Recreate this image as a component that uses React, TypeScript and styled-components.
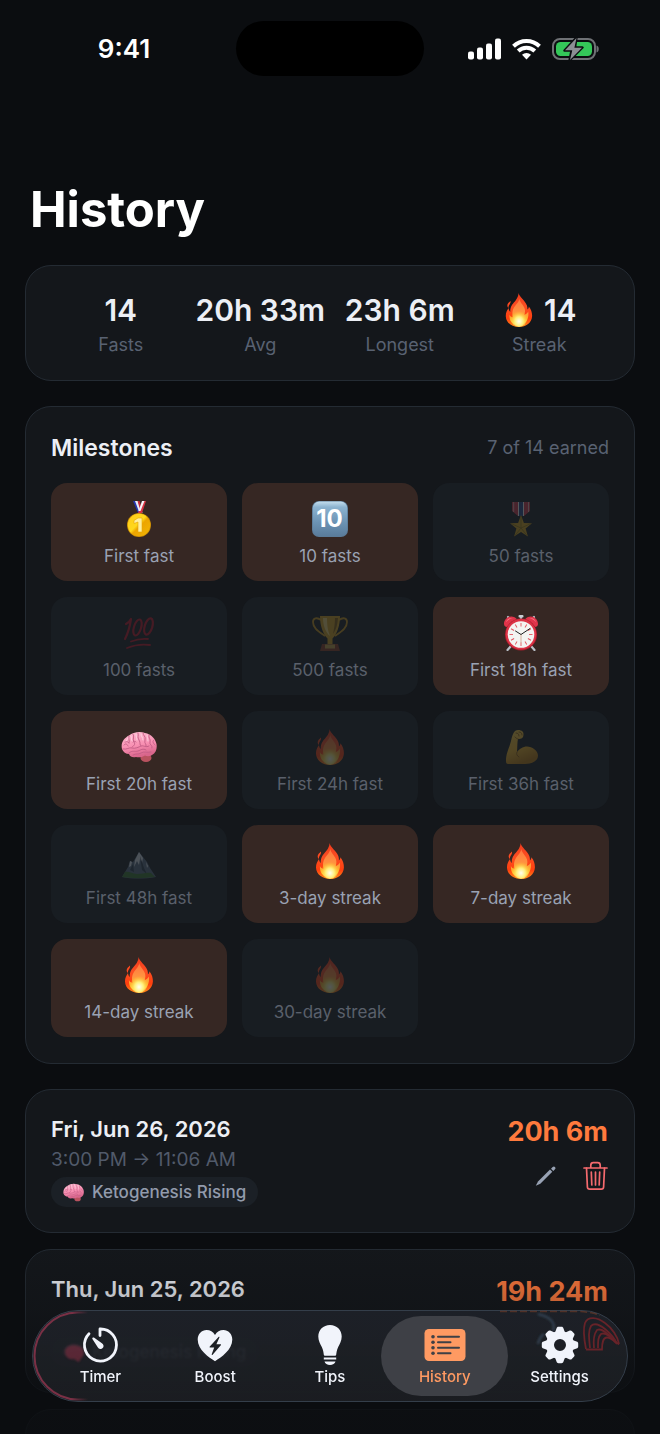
import React from "react";
import styled, { createGlobalStyle } from "styled-components";

const GlobalStyle = createGlobalStyle`
  *, *::before, *::after { box-sizing: border-box; }
  body { margin: 0; background: #0b0d10; }
  button { font: inherit; color: inherit; background: none; border: 0; padding: 0; cursor: pointer; }
  h1, h2, h3, p, ul, dl, dd { margin: 0; padding: 0; }
  ul { list-style: none; }
`;

const Screen = styled.div`
  position: relative;
  height: 100vh;
  overflow: hidden;
  background: #0b0d10;
  color: #eceff5;
  font-family: Inter, "Liberation Sans", sans-serif;
`;

const Scroll = styled.div`
  height: 100%;
  overflow-y: auto;
  scrollbar-width: none;
`;

const StatusBar = styled.header`
  display: grid;
  grid-template-columns: 1fr 188px 1fr;
  align-items: center;
  padding-top: 21px;
  color: #fff;
`;

const Clock = styled.time`
  padding-left: 12px;
  text-align: center;
  font-size: 26px;
  font-weight: 600;
`;

const Island = styled.div`
  height: 55px;
  border-radius: 28px;
  background: #000;
`;

const StatusIcons = styled.div`
  display: flex;
  align-items: center;
  justify-content: center;
  gap: 11px;
  padding-right: 18px;
`;

const Content = styled.main`
  display: flex;
  flex-direction: column;
  padding: 104px 25px 0;
`;

const Title = styled.h1`
  padding-left: 5px;
  margin-bottom: 25px;
  color: #fff;
  font-size: 49px;
  line-height: 60px;
  font-weight: 700;
`;

const Card = styled.section`
  flex: none;
  border: 1px solid #242b33;
  border-radius: 26px;
  background: #14171b;
  padding: 25px;
`;

const Stats = styled(Card).attrs({ as: "dl" })`
  display: grid;
  grid-template-columns: repeat(4, 1fr);
  margin: 0 0 25px;
  padding: 26px 25px 24px;
`;

const Stat = styled.div`
  display: flex;
  flex-direction: column-reverse;
  align-items: center;
  gap: 6px;
  white-space: nowrap;
`;

const StatValue = styled.dd`
  display: flex;
  align-items: center;
  gap: 8px;
  font-size: 30px;
  line-height: 36px;
  font-weight: 600;
`;

const StatLabel = styled.dt`
  color: #596272;
  font-size: 18px;
  line-height: 22px;
`;

const Milestones = styled(Card)`
  margin-bottom: 25px;
  padding: 26px 25px;
`;

const SectionHead = styled.div`
  display: flex;
  justify-content: space-between;
  align-items: center;
  margin-bottom: 20px;
`;

const SectionTitle = styled.h2`
  font-size: 23px;
  line-height: 30px;
  font-weight: 600;
`;

const Earned = styled.p`
  color: #596272;
  font-size: 18px;
  line-height: 22px;
`;

const Grid = styled.ul`
  display: grid;
  grid-template-columns: repeat(3, 1fr);
  gap: 16px 15px;
`;

const Tile = styled.li<{ $earned: boolean }>`
  display: flex;
  flex-direction: column;
  align-items: center;
  gap: 6px;
  padding: 18px 8px 12px;
  border-radius: 16px;
  background: ${(p) => (p.$earned ? "#362723" : "#181d22")};
  color: ${(p) => (p.$earned ? "#9aa2b3" : "#5a606b")};
  font-size: 17px;
  line-height: 26px;
  white-space: nowrap;

  svg {
    opacity: ${(p) => (p.$earned ? 1 : 0.26)};
  }
`;

const Entry = styled(Card)`
  display: flex;
  justify-content: space-between;
  margin-bottom: 16px;
`;

const EntryInfo = styled.div`
  display: flex;
  flex-direction: column;
  align-items: flex-start;
  gap: 4px;
`;

const EntryDate = styled.h3`
  font-size: 22px;
  line-height: 28px;
  font-weight: 600;
`;

const EntryTime = styled.p`
  color: #515a6a;
  font-size: 19px;
  line-height: 26px;
`;

const Stage = styled.p`
  display: flex;
  align-items: center;
  gap: 8px;
  padding: 0 12px;
  border-radius: 15px;
  background: #1b2026;
  color: #929bac;
  font-size: 17px;
  line-height: 30px;
  font-weight: 500;
`;

const EntrySide = styled.div`
  display: flex;
  flex-direction: column;
  align-items: flex-end;
  gap: 13px;
  padding: 1px 1px 0 0;
`;

const Duration = styled.p`
  color: #ff7a3d;
  font-size: 27px;
  line-height: 32px;
  font-weight: 700;
`;

const Actions = styled.div`
  display: flex;
  align-items: center;
  gap: 26px;

  button { display: flex; }
`;

const Fade = styled.div`
  position: absolute;
  inset: auto 0 0;
  height: 190px;
  pointer-events: none;
  background: linear-gradient(rgba(11, 13, 16, 0), rgba(11, 13, 16, 0.26) 35%, rgba(11, 13, 16, 0.8) 78%, rgba(11, 13, 16, 0.85));
`;

const TabBar = styled.nav`
  position: absolute;
  inset: auto 32px 32px;
  display: grid;
  grid-template-columns: repeat(5, 1fr);
  padding: 0 10px;
  border: 1px solid #343e4a;
  border-radius: 46px;
  background: linear-gradient(rgba(31, 35, 42, 0.86), rgba(29, 31, 35, 0.88));
  backdrop-filter: blur(1px);
`;

const Tab = styled.button<{ $active?: boolean }>`
  position: relative;
  display: flex;
  flex-direction: column;
  align-items: center;
  gap: 2px;
  padding: 14px 0;
  color: ${(p) => (p.$active ? "#ff9a62" : "#f1f4fb")};
  font-size: 15px;
  line-height: 20px;
  font-weight: 500;

  &::before {
    content: "";
    position: absolute;
    inset: 5px -6px;
    border-radius: 41px;
    background: ${(p) => (p.$active ? "#3e4046" : "transparent")};
  }

  svg, span { position: relative; }
`;

const Refraction = styled.svg`
  position: absolute;
  top: -1px;
  pointer-events: none;
`;

const LeftRefraction = styled(Refraction)`
  left: -1px;
`;

const RightRefraction = styled(Refraction)`
  right: -1px;
`;

const Fire = ({ size = 36 }: { size?: number }) => (
  <svg width={size} height={size} viewBox="0 0 36 36" aria-hidden="true">
    <defs>
      <linearGradient id="fireOuter" x1="0" y1="0" x2="0" y2="1">
        <stop offset="0" stopColor="#f03a1c" />
        <stop offset=".4" stopColor="#fb4e22" />
        <stop offset=".75" stopColor="#ff3f0e" />
        <stop offset="1" stopColor="#ff8f1a" />
      </linearGradient>
      <linearGradient id="fireMid" x1="0" y1="0" x2="0" y2="1">
        <stop offset="0" stopColor="#ff7440" />
        <stop offset=".5" stopColor="#ff9440" />
        <stop offset=".75" stopColor="#ffae2a" />
        <stop offset="1" stopColor="#ffdc3a" />
      </linearGradient>
      <radialGradient id="fireCore" cx=".5" cy=".7" r=".55">
        <stop offset="0" stopColor="#fffef0" />
        <stop offset=".45" stopColor="#fff07a" />
        <stop offset="1" stopColor="#ffc62e" stopOpacity="0" />
      </radialGradient>
    </defs>
    <path fill="url(#fireOuter)" d="M17.600 0C18 4 24.600 8 26.400 13.200c.5 1.600.6 3 .5 4.300 1-.9 1.500-2 1.500-3.300 2.600 3 3.600 7 3.500 10.200C31.600 31.500 25.500 36 18 36S4.200 31.500 4 24.600c-.1-3.600 1.300-6 3-8.600.2 1.900.7 3.100 1.700 4C8.500 13.500 12 11 14.600 7.600 16.300 5.400 17.400 3 17.600 0z" />
    <path fill="#ff4a20" d="M9 8.500c.4 2-.6 3.200-1.500 4.500-.6 1-.7 2-.5 3-1.700-1.300-1.700-3.600-.5-5.100C7.300 9.900 8.400 9.400 9 8.500z" />
    <path fill="url(#fireMid)" d="M18.300 6c.6 4 4.500 6.500 5.700 10.500.7 2.300.3 4.500-.3 6.700 1.800-.7 3.400-2.200 4.100-3.700 1 6-1.500 14.500-9.800 14.500S7.800 29 7.900 23c.9 1.800 2 2.600 3.600 2.800C9.800 18 13 15 15.600 11.500 17 9.800 18 8 18.300 6z" />
    <ellipse cx="18" cy="26" rx="9" ry="10" fill="url(#fireCore)" />
  </svg>
);

const Brain = ({ size = 36 }: { size?: number }) => (
  <svg width={size} height={size} viewBox="0 0 36 36" aria-hidden="true">
    <defs>
      <linearGradient id="brainFill" x1="0" y1="0" x2=".3" y2="1">
        <stop offset="0" stopColor="#ffc0d4" />
        <stop offset=".6" stopColor="#f88fb2" />
        <stop offset="1" stopColor="#d9668c" />
      </linearGradient>
    </defs>
    <ellipse cx="25" cy="29" rx="5.500" ry="4" fill="#b9525f" />
    <path fill="url(#brainFill)" d="M1 20C-.5 14 3 9 8 6.500 12 3 19 2 24 4c6 1 10.500 6 11.500 11 .8 4.500-.5 9-4.500 11-2 1.500-5 1.500-7 .5-3 2-7 2-9 1.500-3 .8-6 0-7-3-3 0-6-2-7-5z" />
    <path fill="none" stroke="#c25c84" strokeWidth=".9" strokeLinecap="round" d="M3 16c2-2 3-1 4 1M8 7c-1 3 1 4 0 7M12 5c2 3-1 5 1 8s-1 4-2 5M17 4c1 3-1 4 1 7s0 5 2 6M22 4c0 3 3 3 2 7s2 4 1 6M28 6c-1 3 2 4 1 7s3 3 2 6M33 11c-2 1-1 3 1 5M2 20c4 1 6-2 9-1s7-1 9-2 5 2 8 0M8 24c3-3 6-1 9-2s5-3 8-1M12 26c3-2 5 0 8-2s6 0 10-1M4 13c2-1 3 0 4 1M15 13c-1-1-2-1-3 0" />
    <path fill="none" stroke="#ffdbe7" strokeWidth=".8" strokeLinecap="round" d="M5 12c1-2 2-2 2-3M10 7c1 2 0 4 1 5M15 5c0 3 1 4 1 6M20 5c0 3 2 3 2 6M26 6c0 3 1 4 1 6" />
  </svg>
);

const FirstMedal = () => (
  <svg width="36" height="36" viewBox="0 0 36 36" aria-hidden="true">
    <defs>
      <linearGradient id="gold" x1="0" y1="0" x2="1" y2="1">
        <stop offset="0" stopColor="#ffc81a" />
        <stop offset=".45" stopColor="#ffd91c" />
        <stop offset=".55" stopColor="#eca400" />
        <stop offset="1" stopColor="#f2b705" />
      </linearGradient>
    </defs>
    <path fill="#2437b0" d="M12 0h3.500l5.500 12h-4z" />
    <path fill="#e9ecf6" d="M14 0h3l4.500 12h-3z" />
    <path fill="#c92b3b" d="M16.500 0h2l2 6-1.500 2.500z" />
    <path fill="#d63343" d="M25 0h-2.500L17 12h4z" />
    <path fill="#f4f4f8" d="M23.500 0H21l-3.500 10h2z" />
    <circle cx="18" cy="24" r="12" fill="#c98c06" />
    <circle cx="18" cy="24" r="11.200" fill="url(#gold)" />
    <path fill="#ffef9e" stroke="#e5a406" strokeWidth=".6" d="M17 17h4v14h-4V21l-4 1.500v-3z" />
  </svg>
);

const Keycap = () => (
  <svg width="36" height="36" viewBox="0 0 36 36" aria-hidden="true">
    <defs>
      <linearGradient id="keycap" x1="0" y1="0" x2="0" y2="1">
        <stop offset="0" stopColor="#c3dcec" />
        <stop offset=".16" stopColor="#8cb3d0" />
        <stop offset=".6" stopColor="#6c93b4" />
        <stop offset="1" stopColor="#5a7c9b" />
      </linearGradient>
    </defs>
    <rect width="36" height="36" rx="7" fill="#5b7b98" />
    <rect x=".8" y=".6" width="34.400" height="34.400" rx="6.500" fill="url(#keycap)" />
    <text x="17.500" y="26" textAnchor="middle" fill="#fff" fontFamily="Inter, sans-serif" fontSize="24" fontWeight="700">10</text>
  </svg>
);

const StarMedal = () => (
  <svg width="36" height="36" viewBox="0 0 36 36" aria-hidden="true">
    <path fill="#d63a4d" d="M9 1h18v9l-6 5h-6l-6-5z" />
    <path fill="#294a8a" d="M16 1h4v14h-4z" />
    <path fill="#fff" d="M15 1h1v14h-1zM20 1h1v14h-1zM10.500 1h.6v10h-.6zM25 1h.6v10H25z" />
    <path fill="#d9a51c" d="M18 14l2.900 8 8.100.3-6.400 5.100 2.300 8.100L18 30.900l-6.900 4.600 2.300-8.100L7 22.300l8.100-.3z" />
    <path fill="none" stroke="#8c7414" strokeWidth=".8" d="M18 15v12m0 0l10-4.500M18 27l6 7.500M18 27l-6 7.500M18 27L8 22.500" />
  </svg>
);

const Hundred = () => (
  <svg width="36" height="36" viewBox="0 0 36 36" aria-hidden="true">
    <g fill="none" stroke="#c4162a" strokeLinecap="round" strokeLinejoin="round">
      <path strokeWidth="2.200" d="M5 9c2-1 4-3 5-5-1 7-3 14-6 20" />
      <ellipse cx="16.500" cy="12.500" rx="3.600" ry="8.300" strokeWidth="2.200" transform="rotate(17 16.500 12.500)" />
      <ellipse cx="27.500" cy="11.500" rx="3.800" ry="8.500" strokeWidth="2.200" transform="rotate(17 27.500 11.500)" />
      <path strokeWidth="1.800" d="M10 26.500c6-2.500 12-3 17-2.500M6 33c7-3 16-4 23-3" />
    </g>
  </svg>
);

const Trophy = () => (
  <svg width="36" height="36" viewBox="0 0 36 36" aria-hidden="true">
    <path fill="none" stroke="#cf9a1e" strokeWidth="1.800" d="M9 5C5 2 1 3 1 7c0 6 5 9 12 14M27 5c4-3 8-2 8 2 0 6-5 9-12 14" />
    <path fill="#d9a420" d="M8 1h20c0 10-3 18-7.500 22.500V29h-5v-5.500C11 19 8 11 8 1z" />
    <path fill="#f6dc7a" d="M11 3h4c0 8 1 13 3 18-4-3-7-10-7-18z" />
    <path fill="#8d6410" d="M23 3h3c-.5 7-2 12-5 16 1-5 2-10 2-16z" />
    <path fill="#8c3c22" d="M10 29h16l2 7H8z" />
    <path fill="#c9a94a" d="M13 29.500h10v4H13z" />
  </svg>
);

const AlarmClock = () => (
  <svg width="36" height="36" viewBox="0 0 36 36" aria-hidden="true">
    <path stroke="#b9c0c8" strokeWidth="2.200" strokeLinecap="round" d="M8 31l-3.500 4M28 31l3.500 4M5 2l3 3M31 2l-3 3M18 1v4" />
    <path fill="#e0344a" d="M1 9C1 4 6 0 11 2c2 .8 3 2 3 3L4 12c-1.500 0-3-1-3-3zM35 9c0-5-5-9-10-7-2 .8-3 2-3 3l10 7c1.500 0 3-1 3-3z" />
    <path fill="#ff7c8a" d="M3 7c1-3 4-4.500 7-4-3 .5-5 2-7 4zM33 7c-1-3-4-4.500-7-4 3 .5 5 2 7 4z" />
    <rect x="15.500" y="0" width="5" height="2.500" rx="1" fill="#c9ced4" />
    <circle cx="18" cy="19.500" r="16" fill="#a81d2c" />
    <circle cx="18" cy="19.200" r="15.300" fill="#dc3346" />
    <circle cx="18" cy="19.500" r="13.300" fill="#f4f4f2" />
    <g stroke="#e2555f" strokeWidth=".9">
      {Array.from({ length: 12 }, (_, i) => (
        <path key={i} d="M18 8v3.500" transform={`rotate(${i * 30} 18 19.500)`} />
      ))}
    </g>
    <path stroke="#d0a38c" strokeWidth=".8" d="M18 19v9" />
    <path fill="none" stroke="#222" strokeWidth="1" strokeLinecap="round" d="M12.500 16l5.500 3.500 9-6" />
  </svg>
);

const Biceps = () => (
  <svg width="36" height="36" viewBox="0 0 36 36" aria-hidden="true">
    <defs>
      <linearGradient id="biceps" x1="0" y1="0" x2=".4" y2="1">
        <stop offset="0" stopColor="#ffd34a" />
        <stop offset=".6" stopColor="#f5b92a" />
        <stop offset="1" stopColor="#c07f12" />
      </linearGradient>
    </defs>
    <path fill="url(#biceps)" d="M12 2c2-1.500 6-1 7.500.5 1.500 1.500 1 4 .5 5.500-1 2-4 2-5 2-.8 3-.5 8-1 13 2-3 6-5.500 10-5.500 5 0 11 4 11 9C35 32 29 35 22 35H5c-1.500 0-2-1-2-3C3 24 6 20 8 12c.8-4 2-8 4-10z" />
    <path fill="none" stroke="#9a6510" strokeWidth="1" strokeLinecap="round" d="M13 4c2 0 3 1 3 3M16 3c2 0 3 1 3 3M14 23c-1 2 0 4 2 5M12 8c1 1 2 2 3 2" />
  </svg>
);

const Mountain = () => (
  <svg width="36" height="36" viewBox="0 0 36 36" aria-hidden="true">
    <path fill="#5b6f86" d="M18 9l4 5 4 5 3 6 6 9c-11 2-24 2-34 0l6-10 2-6 3 1z" />
    <path fill="#dfe8f2" d="M18 9l4 6-1 5-2-4-1 6-2-4-3 6 1-7zM9 18l2 1-1 4-2 1zM25 19l2 4-1 2z" />
    <path fill="#2f4053" d="M19 13l4 12 3 6-5-4zM12 21l1 8-4-2z" />
    <path fill="#3c7a35" d="M4 29c4-1 7 2 12 2s9-2 14-1l4 4c-11 1.500-23 1.500-33 0z" />
  </svg>
);

const Signal = () => (
  <svg width="33" height="22" viewBox="0 0 33 22" fill="#fff" aria-hidden="true">
    <rect x="0" y="13.500" width="6" height="8" rx="2" />
    <rect x="9" y="9.500" width="6" height="12" rx="2" />
    <rect x="18" y="5.500" width="6" height="16" rx="2" />
    <rect x="27" y=".5" width="6" height="21" rx="2" />
  </svg>
);

const Wifi = () => (
  <svg width="29" height="22" viewBox="0 0 29 22" aria-hidden="true">
    <g fill="none" stroke="#fff" strokeWidth="4">
      <path d="M1.500 8.300a18.600 18.600 0 0 1 26 0" />
      <path d="M6.200 13a12 12 0 0 1 16.600 0" />
    </g>
    <path fill="#fff" d="M10 16.800a6.600 6.600 0 0 1 9 0L14.500 21.500z" />
  </svg>
);

const Battery = () => (
  <svg width="47" height="24" viewBox="0 0 47 24" aria-hidden="true">
    <rect x="1" y="2" width="42" height="20" rx="7" fill="none" stroke="#6f7175" strokeWidth="2" />
    <rect x="4" y="5" width="36" height="14" rx="4.500" fill="#34c759" />
    <path fill="#6f7175" d="M44.500 8.500c3 .8 3 6.200 0 7z" />
    <path d="M24.500.5L12.500 13.500h7l-2 10L30.500 10.500h-7.500z" fill="#8c8f94" stroke="#0b0d10" strokeWidth="2.400" strokeLinejoin="round" />
    <path d="M24.500 1L13 13.200h7.300L18 23 30 10.800h-7.600z" fill="#8c8f94" />
  </svg>
);

const Pencil = () => (
  <svg width="22" height="22" viewBox="0 0 22 22" aria-hidden="true">
    <path d="M3 16.500L15 4.500l2.300 2.300-12 12-4.500 2z" fill="#98a2b4" />
    <path d="M16 3.700l1.700-1.700a1.600 1.600 0 0 1 2.300 2.300L18.300 6z" fill="#98a2b4" />
  </svg>
);

const Trash = () => (
  <svg width="25" height="30" viewBox="0 0 25 30" fill="none" stroke="#f56a6e" strokeWidth="1.700" strokeLinecap="round" strokeLinejoin="round" aria-hidden="true">
    <path d="M1 7h23M7.800 7V4.200a2.500 2.500 0 0 1 2.500-2.500h4.400a2.500 2.500 0 0 1 2.500 2.500V7" />
    <path d="M3.500 7l.9 19a2.300 2.300 0 0 0 2.300 2.200h11.600a2.300 2.300 0 0 0 2.300-2.200l.9-19M8.300 11l.5 13M12.500 11v13M16.700 11l-.5 13" />
  </svg>
);

const TimerIcon = () => (
  <svg width="40" height="40" viewBox="0 0 40 40" aria-hidden="true">
    <path fill="none" stroke="currentColor" strokeWidth="2.800" strokeLinecap="round" strokeLinejoin="round" d="M20 10.500V4A16 16 0 1 1 9 8.800" />
    <path fill="currentColor" d="M12.600 12.700c.4-.4.900-.4 1.300-.1l8 5.700a3 3 0 1 1-4 4.100L12.400 14c-.3-.4-.2-.9.2-1.300z" />
  </svg>
);

const BoostIcon = () => (
  <svg width="40" height="40" viewBox="0 0 40 40" aria-hidden="true">
    <path fill="currentColor" d="M20 36.200C14 32.500 2.700 25 2.700 14.600 2.700 9 6.700 5 11.600 5c3.500 0 6.500 1.800 8.400 5 1.900-3.200 4.900-5 8.400-5 4.900 0 8.900 4 8.900 9.600C37.300 25 26 32.500 20 36.200z" />
    <path fill="#1d2025" d="M23.500 12L14.800 21.500c-.4.500-.2 1 .4 1h4l-2.500 6.800c-.2.700.4 1 .9.500l8.200-9.500c.4-.5.200-1-.4-1h-4l3-6.700c.3-.7-.4-1.200-.9-.6z" />
  </svg>
);

const TipsIcon = () => (
  <svg width="40" height="40" viewBox="0 0 40 40" fill="currentColor" aria-hidden="true">
    <path d="M20 0c6.800 0 11.700 5 11.700 11.500 0 4.500-2 7.500-3.500 10.500-1.500 3-1.700 5.500-2 7.800-.1.600-.5 1-1.100 1H14.900c-.6 0-1-.4-1.100-1-.3-2.300-.5-4.800-2-7.800-1.500-3-3.500-6-3.500-10.500C8.300 5 13.200 0 20 0zM13.800 32.500h12.400v2H13.800zM14.500 36.500h11c-.6 2-2.800 3.500-5.500 3.500s-4.900-1.500-5.500-3.500z" />
  </svg>
);

const HistoryIcon = () => (
  <svg width="42" height="40" viewBox="-1 0 42 40" aria-hidden="true">
    <rect x="-.5" y="4" width="41" height="32" rx="4.500" fill="currentColor" />
    <g fill="#3e4046">
      {[11.700, 17.200, 22.700, 28.300].map((y) => (
        <circle key={y} cx="8" cy={y} r="1.800" />
      ))}
    </g>
    <path stroke="#3e4046" strokeWidth="2" strokeLinecap="round" d="M13 11.700h21M13 17.200h12.500M13 22.700h21M13 28.300h12.500" />
  </svg>
);

const SettingsIcon = () => (
  <svg width="40" height="40" viewBox="0 0 40 40" aria-hidden="true">
    <circle cx="20" cy="20" r="10" fill="none" stroke="currentColor" strokeWidth="8" />
    {Array.from({ length: 8 }, (_, i) => (
      <path key={i} fill="currentColor" transform={`rotate(${i * 45} 20 20)`} d="M14.500 9l2-5.500C16.800 2.300 17.500 1.800 18.500 1.800h3c1 0 1.700.5 2 1.700l2 5.500z" />
    ))}
  </svg>
);

const milestones = [
  { label: "First fast", icon: <FirstMedal />, earned: true },
  { label: "10 fasts", icon: <Keycap />, earned: true },
  { label: "50 fasts", icon: <StarMedal />, earned: false },
  { label: "100 fasts", icon: <Hundred />, earned: false },
  { label: "500 fasts", icon: <Trophy />, earned: false },
  { label: "First 18h fast", icon: <AlarmClock />, earned: true },
  { label: "First 20h fast", icon: <Brain />, earned: true },
  { label: "First 24h fast", icon: <Fire />, earned: false },
  { label: "First 36h fast", icon: <Biceps />, earned: false },
  { label: "First 48h fast", icon: <Mountain />, earned: false },
  { label: "3-day streak", icon: <Fire />, earned: true },
  { label: "7-day streak", icon: <Fire />, earned: true },
  { label: "14-day streak", icon: <Fire />, earned: true },
  { label: "30-day streak", icon: <Fire />, earned: false },
];

const stats = [
  { label: "Fasts", value: "14" },
  { label: "Avg", value: "20h 33m" },
  { label: "Longest", value: "23h 6m" },
  { label: "Streak", value: "14", streak: true },
];

const entries = [
  { date: "Fri, Jun 26, 2026", time: "3:00 PM → 11:06 AM", duration: "20h 6m" },
  { date: "Thu, Jun 25, 2026", time: "", duration: "19h 24m" },
  { date: "", time: "", duration: "" },
];

const tabs = [
  { label: "Timer", icon: <TimerIcon /> },
  { label: "Boost", icon: <BoostIcon /> },
  { label: "Tips", icon: <TipsIcon /> },
  { label: "History", icon: <HistoryIcon />, active: true },
  { label: "Settings", icon: <SettingsIcon /> },
];

export default function App() {
  return (
    <Screen>
      <GlobalStyle />
      <Scroll>
        <StatusBar>
          <Clock>9:41</Clock>
          <Island />
          <StatusIcons>
            <Signal />
            <Wifi />
            <Battery />
          </StatusIcons>
        </StatusBar>
        <Content>
          <Title>History</Title>
          <Stats>
            {stats.map((s) => (
              <Stat key={s.label}>
                <StatLabel>{s.label}</StatLabel>
                <StatValue>
                  {s.streak && <Fire size={34} />}
                  {s.value}
                </StatValue>
              </Stat>
            ))}
          </Stats>
          <Milestones>
            <SectionHead>
              <SectionTitle>Milestones</SectionTitle>
              <Earned>7 of 14 earned</Earned>
            </SectionHead>
            <Grid>
              {milestones.map((m) => (
                <Tile key={m.label} $earned={m.earned}>
                  {m.icon}
                  {m.label}
                </Tile>
              ))}
            </Grid>
          </Milestones>
          {entries.map((e, i) => (
            <Entry key={i}>
              <EntryInfo>
                <EntryDate>{e.date || "\u00a0"}</EntryDate>
                <EntryTime>{e.time || "\u00a0"}</EntryTime>
                {e.date && (
                  <Stage>
                    <Brain size={21} />
                    Ketogenesis Rising
                  </Stage>
                )}
              </EntryInfo>
              <EntrySide>
                <Duration>{e.duration}</Duration>
                {e.time && (
                  <Actions>
                    <button type="button" aria-label="Edit fast"><Pencil /></button>
                    <button type="button" aria-label="Delete fast"><Trash /></button>
                  </Actions>
                )}
              </EntrySide>
            </Entry>
          ))}
        </Content>
      </Scroll>
      <Fade />
      <TabBar aria-label="Main">
        <LeftRefraction width="100" height="92" viewBox="0 0 100 92" fill="none" aria-hidden="true">
          <defs>
            <filter id="soften" x="-20%" y="-20%" width="140%" height="140%"><feGaussianBlur stdDeviation="1" /></filter>
            <linearGradient id="rim" x1="0" y1="0" x2="1" y2="0">
              <stop offset="0" stopColor="#7a3045" />
              <stop offset=".7" stopColor="#7a3045" />
              <stop offset="1" stopColor="#7a3045" stopOpacity="0" />
            </linearGradient>
          </defs>
          <path d="M56 2.500H46a43.500 43.500 0 0 0 0 87h10" stroke="url(#rim)" strokeWidth="2" />
          <path filter="url(#soften)" fill="#7a2b3e" opacity=".6" d="M33 41c1-5 8-7 13-5 5 1 7 6 5 10-1 2-3 3-4 6-2 0-3-3-5-3-5 1-9-2-9-8z" />
        </LeftRefraction>
        <RightRefraction width="130" height="92" viewBox="0 0 130 92" fill="none" aria-hidden="true">
          <path d="M2 1.500h75c10 0 18 1 25 4" stroke="#b4532c" strokeWidth="1.500" strokeDasharray="7 3" opacity=".35" />
          <path filter="url(#soften)" d="M40 4c12 3 18 8 15 17M40 34c1-5 3-8 6-10" stroke="#33404f" strokeWidth="2.500" />
          <g stroke="#672329" strokeWidth="1.800">
            <path d="M88 39c-2-10-3-20-1-26 3-7 12-6 20 0 7 5 13 14 14 21" />
            <path d="M92 38c-1-10-2-17 1-22 4-4 9-1 14 3 6 5 10 10 12 15" />
            <path d="M96 38c-1-9 0-14 3-18 4-2 8 2 12 5 3 3 6 6 8 9" />
            <path d="M100 38c0-7 0-11 3-14 4-2 10 3 15 9" />
            <path d="M88 39.500h16c0-7 1-12 5-12 4 0 8 4 12 7" />
          </g>
        </RightRefraction>
        {tabs.map((t) => (
          <Tab key={t.label} type="button" $active={t.active} aria-current={t.active ? "page" : undefined}>
            {t.icon}
            <span>{t.label}</span>
          </Tab>
        ))}
      </TabBar>
    </Screen>
  );
}
